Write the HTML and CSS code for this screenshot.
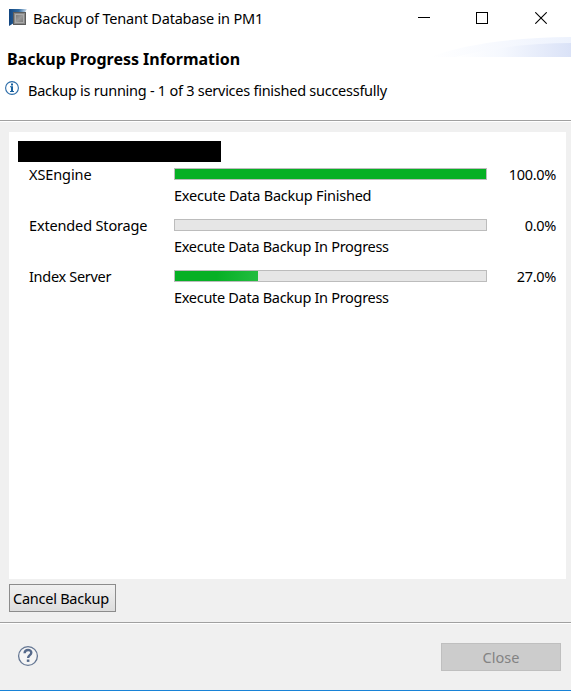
FILE: index.html
```html
<!DOCTYPE html>
<html lang="en">
<head>
<meta charset="utf-8">
<title>Backup of Tenant Database in PM1</title>
<link rel="stylesheet" href="styles.css">
</head>
<body>
<div class="dialog">
  <header class="titlebar">
    <svg class="app-icon" width="18" height="18" viewBox="0 0 18 18">
      <defs>
        <linearGradient id="blue" x1="0" y1="0" x2="1" y2="0"><stop offset="0" stop-color="#124580"/><stop offset=".55" stop-color="#326ca2"/><stop offset="1" stop-color="#d5e2ef"/></linearGradient>
        <linearGradient id="steel" x1="0" y1="0" x2="1" y2="1"><stop offset="0" stop-color="#777"/><stop offset=".5" stop-color="#999"/><stop offset="1" stop-color="#777"/></linearGradient>
      </defs>
      <path d="M0 0H18L15 5L5 14L0 17Z" fill="url(#blue)"/>
      <rect x="4.5" y="3.5" width="12" height="12" fill="#888" stroke="#5c5c5c"/>
      <rect x="6.5" y="5.5" width="8" height="8" fill="url(#steel)" stroke="#aaa"/>
    </svg>
    <span class="title">Backup of Tenant Database in PM1</span>
    <div class="window-controls">
      <svg width="12" height="12"><path d="M0 5.5H12" stroke="#000"/></svg>
      <svg width="12" height="12"><rect x=".5" y=".5" width="11" height="11" fill="none" stroke="#000"/></svg>
      <svg width="12" height="12"><path d="M.3 .3L11.7 11.7M11.7 .3L.3 11.7" stroke="#000" stroke-width="1.1"/></svg>
    </div>
  </header>
  <section class="banner">
    <svg class="swoosh" width="141" height="20" viewBox="0 0 141 20">
      <defs><linearGradient id="wave"><stop offset="0" stop-color="#fff"/><stop offset=".4" stop-color="#f5f8fe"/><stop offset="1" stop-color="#dae2f7"/></linearGradient>
      <linearGradient id="wave-light"><stop offset="0" stop-color="#fff"/><stop offset="1" stop-color="#edf2fd"/></linearGradient></defs>
      <path d="M0 20Q50 1 141 0V20Z" fill="url(#wave-light)"/>
      <path d="M25 20Q80 6 141 6V20Z" fill="url(#wave)"/>
    </svg>
    <h1>Backup Progress Information</h1>
    <div class="message">
      <svg class="info-icon" width="14" height="14" viewBox="0 0 14 14"><circle cx="7" cy="7" r="6.4" fill="#fff" stroke="#2c6ca8" stroke-width="1.1"/><path d="M6 2.5h2v2H6zM5 5.3h3v4.6h1v1H5v-1h1V6.3H5z" fill="#17609f"/></svg>
      <span class="message-text">Backup is running - 1 of 3 services finished successfully</span>
    </div>
  </section>
  <main class="content">
    <div class="panel">
      <div class="redacted"></div>
      <div class="service">
        <span class="name xs">XSEngine</span><div class="bar"><div class="fill" style="width:100%"></div></div><span class="percent">100.0%</span>
        <span class="status finished">Execute Data Backup Finished</span>
      </div>
      <div class="service">
        <span class="name ext">Extended Storage</span><div class="bar"></div><span class="percent">0.0%</span>
        <span class="status">Execute Data Backup In Progress</span>
      </div>
      <div class="service">
        <span class="name idx">Index Server</span><div class="bar"><div class="fill active" style="width:26.7%"></div></div><span class="percent">27.0%</span>
        <span class="status">Execute Data Backup In Progress</span>
      </div>
    </div>
    <button class="cancel">Cancel Backup</button>
  </main>
  <footer class="footer">
    <svg width="22" height="22" viewBox="0 0 22 22"><circle cx="11" cy="11" r="9.4" fill="#f5f5f5" stroke="#647693" stroke-width="1.3"/><path d="M7.6 8.2C7.8 3.9 14.4 4 14.3 7.8C14.2 10.1 11.2 10.3 11.1 13" fill="none" stroke="#566a8b" stroke-width="2.4"/><rect x="9.8" y="14.5" width="2.6" height="2.4" fill="#566a8b"/></svg>
    <button class="close" disabled>Close</button>
  </footer>
</div>
</body>
</html>
```
FILE: styles.css
```css
* { box-sizing: border-box; }
body { margin: 0; font: 14.5px/18px "Noto Sans", sans-serif; color: #000; }
svg { display: block; flex: none; }
.dialog { width: 571px; height: 691px; display: flex; flex-direction: column; background: #f0f0f0; border-bottom: 1px solid #1883d7; overflow: hidden; white-space: nowrap; }
.titlebar { height: 37px; background: #fff; display: flex; align-items: center; padding: 0 24px 1px 9px; }
.title { margin-left: 6px; letter-spacing: -.2px; }
.window-controls { margin-left: auto; display: flex; gap: 47px; }
.window-controls svg:first-child { margin-right: -1px; }
.banner { position: relative; height: 85px; background: #fff; border-bottom: 1px solid #fff; box-shadow: inset 0 -1px #a0a0a0; padding: 12px 0 0 7px; }
.swoosh { position: absolute; right: 0; top: 0; }
h1 { margin: 0; font-size: 16px; line-height: 20px; font-weight: 700; letter-spacing: -.03px; }
.message { display: flex; margin: 12px 0 0 -2px; gap: 9px; }
.message-text { letter-spacing: -.26px; }
.content { height: 500px; padding: 10px 5px 0 9px; }
.panel { height: 447px; background: #fff; padding: 9px 10px 0 9px; }
.redacted { width: 203px; height: 21px; background: #000; }
.service { display: grid; grid-template-columns: 145px 313px 1fr; grid-template-rows: 21px 21px; height: 51px; padding-left: 11px; }
.redacted + .service { margin-top: 3px; }
.xs { letter-spacing: -.1px; }
.ext { letter-spacing: -.15px; }
.idx { letter-spacing: -.37px; }
.idx { letter-spacing: -.3px; }
.bar { height: 12px; margin-top: 3px; background: #e6e6e6; border: 1px solid #bcbcbc; }
.fill { height: 100%; background: #06b025; }
.active { background: linear-gradient(100deg, #06b025 50%, #24bd41 100%); }
.percent { text-align: right; letter-spacing: -.3px; }
.status { grid-column: 2; letter-spacing: -.3px; }
.finished { letter-spacing: -.22px; }
button { font: inherit; padding: 0; }
.cancel { display: block; width: 107px; height: 28px; margin-top: 5px; padding: 0 4px 1px 3px; text-align: left; letter-spacing: -.25px; border: 1px solid #8c8c8c; background: linear-gradient(#f1f1f1, #ddd); color: #000; }
.footer { flex: 1; border-top: 1px solid #a0a0a0; box-shadow: inset 0 1px #fff; display: flex; justify-content: space-between; align-items: flex-start; padding: 20px 10px 0 17px; }
.footer svg { margin-top: 2px; }
.close { width: 120px; height: 28px; padding-bottom: 1px; border: 1px solid #bfbfbf; background: #ccc; color: #838383; }
```
